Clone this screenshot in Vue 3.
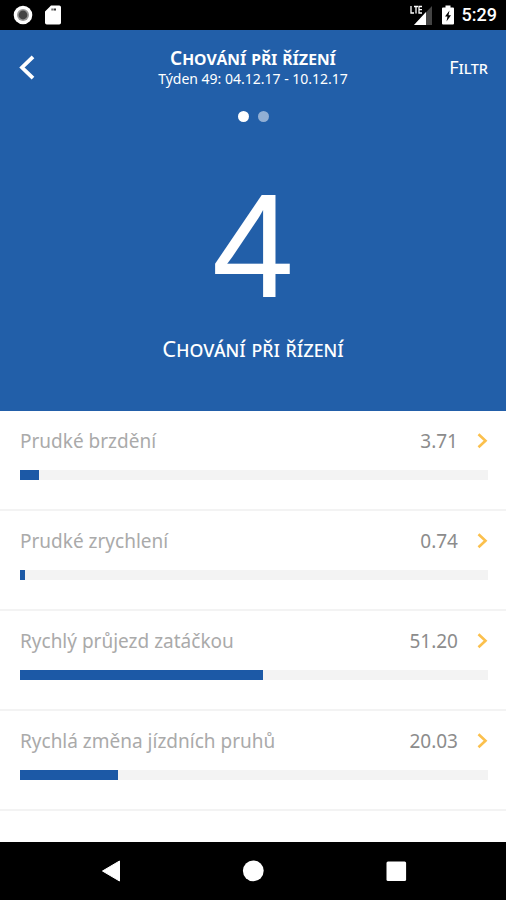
<script setup>
const rows = [
  { label: 'Prudké brzdění', value: 3.71 },
  { label: 'Prudké zrychlení', value: 0.74 },
  { label: 'Rychlý průjezd zatáčkou', value: 51.2 },
  { label: 'Rychlá změna jízdních pruhů', value: 20.03 },
]
const barWidth = (value) => `${Math.ceil(value)}%`
</script>

<template>
  <div class="screen">
    <div class="status">
      <div class="status-group left">
        <svg width="20" height="20" viewBox="0 0 20 20" aria-hidden="true">
          <circle cx="10" cy="10" r="9.3" fill="#fff" />
          <circle cx="10" cy="10" r="6" fill="#999" />
          <circle cx="10" cy="10" r="4.4" fill="#444" />
        </svg>
        <svg width="16" height="20" viewBox="0 0 16 20" aria-hidden="true">
          <path d="M6 .5h8.2A1.8 1.8 0 0 1 16 2.300v15.400a1.800 1.800 0 0 1-1.800 1.800H1.800A1.800 1.800 0 0 1 0 17.700V6.500z" fill="#fff" />
          <path d="M6.500 3.500h1.200v2H6.500zM8.500 3.500H11v2H8.500z" fill="#333" />
        </svg>
      </div>
      <div class="status-group right">
        <svg width="24" height="20" viewBox="0 0 24 20" aria-hidden="true">
          <path d="M22 1v19H4z" fill="#444" />
          <path d="M16 7v13H4z" fill="#fff" />
          <path d="M1 1v7h3M4 1.500h4M6 1.500v7M12 1.500H9V8h3M9 4.700h3" fill="none" stroke="#fff" stroke-width="1.300" />
        </svg>
        <svg width="12" height="20" viewBox="0 0 12 20" aria-hidden="true">
          <path d="M3.500 .5h5v2H11a1 1 0 0 1 1 1v15a1 1 0 0 1-1 1H1a1 1 0 0 1-1-1v-15a1 1 0 0 1 1-1h2.500z" fill="#fff" />
          <path d="M7.500 5.500 3 11.500h2.500L4.500 16.500 9 10.300H6.500z" fill="#000" />
        </svg>
        <span class="clock">5:29</span>
      </div>
    </div>

    <header class="hero">
      <div class="toolbar">
        <button class="back" type="button" aria-label="Zpět">
          <svg width="17" height="26" viewBox="0 0 17 26" aria-hidden="true">
            <path d="M15 1.800 4 12.500l11 10.700" fill="none" stroke="#fff" stroke-width="3.800" />
          </svg>
        </button>
        <div class="heading">
          <h1>Chování při řízení</h1>
          <p>Týden 49: 04.12.17 - 10.12.17</p>
        </div>
        <button class="filter" type="button">Filtr</button>
      </div>
      <div class="dots">
        <span class="dot active"></span>
        <span class="dot"></span>
      </div>
      <div class="score">4</div>
      <h2>Chování při řízení</h2>
    </header>

    <main class="list">
      <a v-for="row in rows" :key="row.label" class="row" href="#">
        <span class="line">
          <span class="label">{{ row.label }}</span>
          <span class="value">{{ row.value.toFixed(2) }}</span>
          <svg width="12" height="16" viewBox="0 0 12 16" aria-hidden="true">
            <path d="M2.500 1.200 9.500 7.700l-7 6.500" fill="none" stroke="#fbc04d" stroke-width="2.600" />
          </svg>
        </span>
        <span class="track">
          <span class="fill" :style="{ width: barWidth(row.value) }"></span>
        </span>
      </a>
    </main>

    <nav class="system">
      <button type="button" aria-label="Zpět">
        <svg width="22" height="22" viewBox="0 0 22 22" aria-hidden="true">
          <path d="M20.500 1v20L3.500 11z" fill="#fff" stroke="#fff" stroke-linejoin="round" />
        </svg>
      </button>
      <button type="button" aria-label="Domů">
        <svg width="22" height="22" viewBox="0 0 22 22" aria-hidden="true">
          <circle cx="11.300" cy="10.800" r="10.400" fill="#fff" />
        </svg>
      </button>
      <button type="button" aria-label="Přehled">
        <svg width="22" height="22" viewBox="0 0 22 22" aria-hidden="true">
          <rect x="1.500" y="1.500" width="19.600" height="19.600" rx="1.500" fill="#fff" />
        </svg>
      </button>
    </nav>
  </div>
</template>

<style>
body {
  margin: 0;
  background: #fff;
}
</style>

<style scoped>
.screen {
  display: flex;
  flex-direction: column;
  min-height: 100vh;
  font-family: "Noto Sans", "Open Sans", sans-serif;
  background: #fff;
}
svg {
  display: block;
  flex: none;
}
button {
  border: 0;
  padding: 0;
  background: none;
  color: inherit;
  font: inherit;
  cursor: pointer;
}
.status {
  display: flex;
  justify-content: space-between;
  align-items: center;
  height: 30px;
  padding: 0 9px 0 13px;
  background: #000;
  color: #fff;
}
.status-group {
  display: flex;
  align-items: center;
}
.left {
  gap: 12px;
}
.right {
  gap: 8px;
}
.clock {
  font: 500 18px/32px Roboto, sans-serif;
}
.hero {
  display: flex;
  flex-direction: column;
  padding-bottom: 47px;
  background: #225fa9;
  color: #fff;
  text-align: center;
}
.toolbar {
  display: grid;
  grid-template-columns: 64px 1fr 64px;
  align-items: center;
  height: 76px;
  padding: 0 18px;
}
.back {
  justify-self: start;
}
.filter {
  justify-self: end;
  padding-bottom: 2px;
  font-size: 18px;
  line-height: 24px;
  font-variant-caps: small-caps;
}
h1,
h2,
p {
  margin: 0;
}
h1 {
  font-size: 19px;
  line-height: 22px;
  font-weight: 600;
  font-variant-caps: small-caps;
}
p {
  font-size: 14px;
  line-height: 20px;
}
.dots {
  display: flex;
  justify-content: center;
  gap: 9px;
  padding-top: 5px;
}
.dot {
  width: 11px;
  height: 11px;
  border-radius: 50%;
  background: #91afd4;
}
.active {
  background: #fff;
}
.score {
  padding: 54px 0 16px;
  font-family: "Liberation Sans", sans-serif;
  font-size: 148px;
  line-height: 140px;
}
h2 {
  font-size: 22px;
  line-height: 32px;
  font-weight: 400;
  font-variant-caps: small-caps;
}
.list {
  flex: 1;
}
.row {
  display: block;
  padding: 18px 18px 29px 20px;
  border-bottom: 2px solid #f3f3f3;
  text-decoration: none;
}
.line {
  display: flex;
  align-items: center;
  height: 24px;
  font-size: 19px;
  line-height: 24px;
}
.label {
  flex: 1;
  color: #aaa;
}
.value {
  margin-right: 18px;
  color: #8c8c8c;
}
.track {
  display: block;
  height: 10px;
  margin-top: 17px;
  background: #f3f3f3;
}
.fill {
  display: block;
  height: 10px;
  background: #1c59a6;
}
.system {
  display: flex;
  justify-content: space-between;
  align-items: center;
  height: 58px;
  padding: 0 99px;
  background: #000;
}
</style>
